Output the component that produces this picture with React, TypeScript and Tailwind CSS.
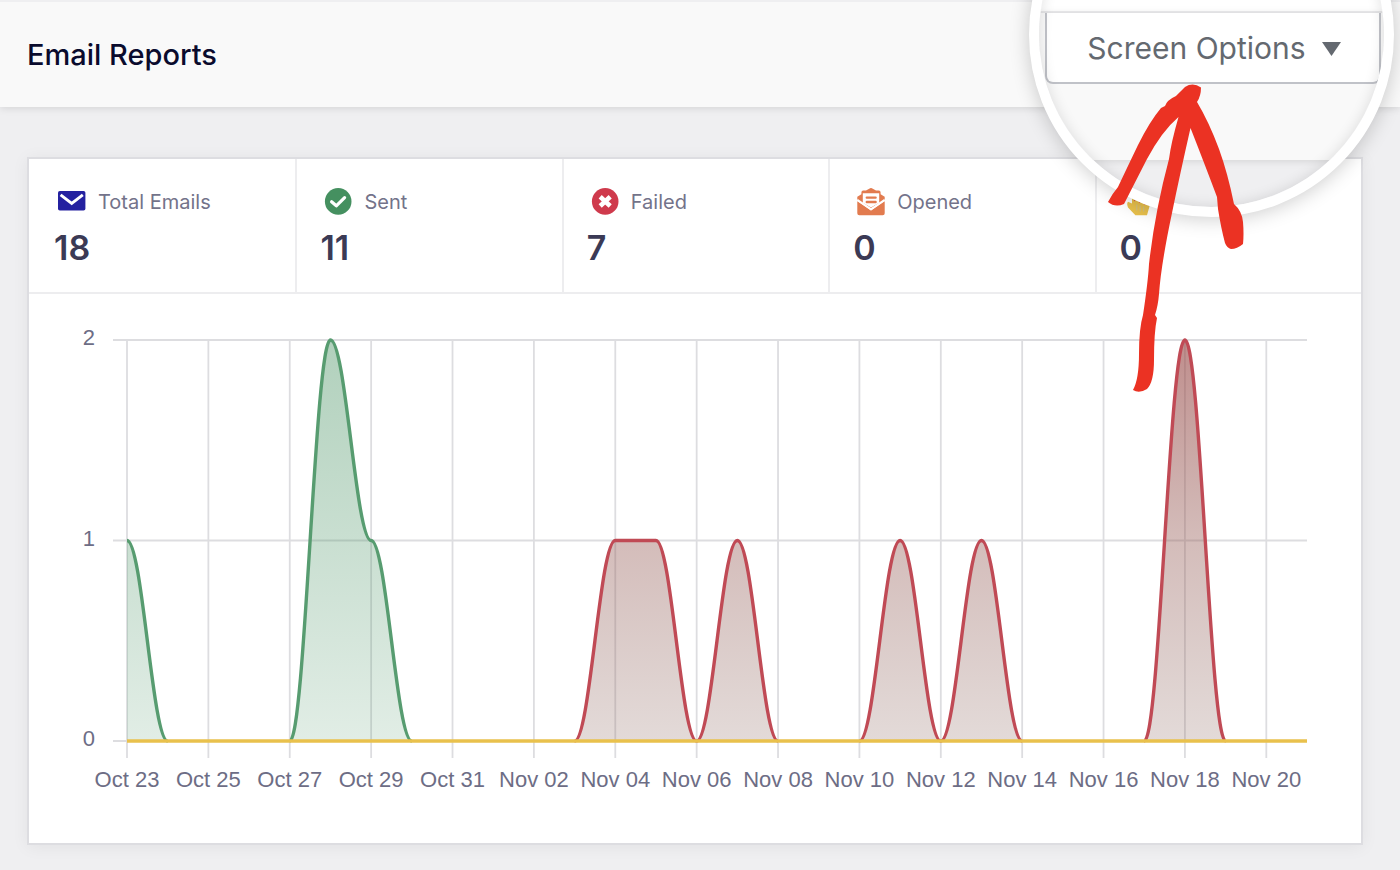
import type { ReactNode } from 'react';

type Stat = { label: string; value: number; icon: ReactNode };

const DAYS = 29;
const PLOT = { left: 98, right: 1278, top: 46, bottom: 447 };

const labels = [
  'Oct 23', 'Oct 25', 'Oct 27', 'Oct 29', 'Oct 31', 'Nov 02', 'Nov 04', 'Nov 06',
  'Nov 08', 'Nov 10', 'Nov 12', 'Nov 14', 'Nov 16', 'Nov 18', 'Nov 20',
];

// [day, value] runs, each one starts and ends on the base line
const sent = [
  [[0, 1], [1, 0]],
  [[4, 0], [5, 2], [6, 1], [7, 0]],
];
const failed = [
  [[11, 0], [12, 1], [13, 1], [14, 0]],
  [[14, 0], [15, 1], [16, 0]],
  [[18, 0], [19, 1], [20, 0]],
  [[20, 0], [21, 1], [22, 0]],
  [[25, 0], [26, 2], [27, 0]],
];

const toX = (day: number) => PLOT.left + ((PLOT.right - PLOT.left) * day) / DAYS;
const toY = (value: number) => PLOT.bottom - ((PLOT.bottom - PLOT.top) * value) / 2;

function linePath(points: number[][]) {
  return points
    .map(([day, value], i) => {
      const x = toX(day);
      const y = toY(value);
      if (i === 0) return `M${x} ${y}`;
      const px = toX(points[i - 1][0]);
      const py = toY(points[i - 1][1]);
      const c = (x - px) * 0.38;
      return `C${px + c} ${py} ${x - c} ${y} ${x} ${y}`;
    })
    .join(' ');
}

function areaPath(points: number[][]) {
  const first = toX(points[0][0]);
  const last = toX(points[points.length - 1][0]);
  return `${linePath(points)} L${last} ${PLOT.bottom} L${first} ${PLOT.bottom} Z`;
}

function MailIcon() {
  return (
    <svg className="size-[34px]" viewBox="0 0 34 34" fill="none" aria-hidden="true">
      <rect x="4" y="6" width="27.4" height="19.6" rx="1.8" fill="#2421a0" />
      <path d="M6.6 9.8 17.7 18.4 28.8 9.8" stroke="#fff" strokeWidth="2.9" />
    </svg>
  );
}

function SentIcon() {
  return (
    <svg className="size-[34px]" viewBox="0 0 34 34" fill="none" aria-hidden="true">
      <circle cx="18.2" cy="16.4" r="13.3" fill="#459060" />
      <path d="M11.6 16.8 16.3 20.8 24.6 12.6" stroke="#fff" strokeWidth="3.2" strokeLinecap="round" strokeLinejoin="round" />
    </svg>
  );
}

function FailedIcon() {
  return (
    <svg className="size-[34px]" viewBox="0 0 34 34" fill="none" aria-hidden="true">
      <circle cx="18.2" cy="16.4" r="13.3" fill="#cf3a4c" />
      <path d="M13.2 11.8 23.2 21M23.2 11.8 13.2 21" stroke="#fff" strokeWidth="4.6" />
    </svg>
  );
}

function OpenedIcon() {
  return (
    <svg className="size-[34px]" viewBox="0 0 34 34" fill="none" aria-hidden="true">
      <path d="M4.3 11.8 8.4 9.200V7.400Q8.4 5.600 10.2 5.600H13L16.2 3.700Q18 2.400 19.8 3.700L23 5.600H25.8Q27.6 5.600 27.6 7.400V9.200L31.7 11.8V15.200L18 23.200 4.3 15.200Z" fill="#e27b4f" />
      <path d="M9.8 8.200H26.200V17.8L18 22.6 9.8 17.8Z" fill="#fff" />
      <path d="M13.8 12.6H22.6M13.8 17H22.6" stroke="#e27b4f" strokeWidth="2.4" strokeLinecap="round" />
      <path d="M4.3 16.200 18 25.600 31.7 16.200V28.200Q31.7 30.200 29.7 30.200H6.3Q4.3 30.200 4.3 28.200Z" fill="#e27b4f" />
      <path d="M4.3 14.800 18 24.200 31.7 14.800" stroke="#fff" strokeWidth="2" />
    </svg>
  );
}

function ClickedIcon() {
  return (
    <svg className="size-[34px]" viewBox="0 0 34 34" fill="none" aria-hidden="true">
      <path d="M12 5Q14 2.4 16 5.4V10L28.6 14Q30.4 16 29.6 21L27 30.2H15.4L8 22.4Q6.4 18.6 8 16.8L12 18.6Z" fill="#e9c14c" />
      <path d="M16.8 19.400V25.400M20.2 20.400V26.400M23.6 21.400V26.400" stroke="#d2bf80" strokeWidth="1.2" />
      <g fill="#e2603f">
        <circle cx="14.6" cy="15.4" r="0.8" />
        <circle cx="19.6" cy="17.2" r="0.8" />
        <circle cx="24.8" cy="19.200" r="0.8" />
      </g>
    </svg>
  );
}

const stats: Stat[] = [
  { label: 'Total Emails', value: 18, icon: <MailIcon /> },
  { label: 'Sent', value: 11, icon: <SentIcon /> },
  { label: 'Failed', value: 7, icon: <FailedIcon /> },
  { label: 'Opened', value: 0, icon: <OpenedIcon /> },
  { label: '', value: 0, icon: <ClickedIcon /> },
];

function StatsRow() {
  return (
    <div className="grid grid-cols-5 border-b-2 border-[#ededef]">
      {stats.map((stat, i) => (
        <div key={i} className="border-l-2 border-[#ededef] pt-[25px] pr-6 pb-6 pl-[23px] first:border-l-0 first:pl-[25px]">
          <div className="flex h-9 items-center gap-[10px] text-xl text-[#73738a]">
            {stat.icon}
            <span>{stat.label}</span>
          </div>
          <div className="mt-2 text-[34px] leading-10 font-semibold text-[#3b3a55]">{stat.value}</div>
        </div>
      ))}
    </div>
  );
}

function Chart() {
  return (
    <svg className="block w-full" viewBox="0 0 1332 549" role="img" aria-label="Emails per day">
      <defs>
        <linearGradient id="sentFill" gradientUnits="userSpaceOnUse" x1="0" y1={PLOT.top} x2="0" y2={PLOT.bottom}>
          <stop offset="0" stopColor="#459060" stopOpacity="0.42" />
          <stop offset="1" stopColor="#459060" stopOpacity="0.16" />
        </linearGradient>
        <linearGradient id="failedFill" gradientUnits="userSpaceOnUse" x1="0" y1={PLOT.top} x2="0" y2={PLOT.bottom}>
          <stop offset="0" stopColor="#9d504e" stopOpacity="0.65" />
          <stop offset="0.5" stopColor="#965c56" stopOpacity="0.41" />
          <stop offset="1" stopColor="#8f6b63" stopOpacity="0.25" />
        </linearGradient>
      </defs>

      {/* Grid */}
      <g stroke="#dddde0" strokeWidth="1.8">
        {labels.map((label, i) => (
          <line key={label} x1={toX(i * 2)} x2={toX(i * 2)} y1={PLOT.top} y2={PLOT.bottom + 17} />
        ))}
        {[0, 1, 2].map((value) => (
          <line key={value} x1={PLOT.left - 14} x2={PLOT.right} y1={toY(value)} y2={toY(value)} />
        ))}
      </g>

      {/* Series */}
      {sent.map((run, i) => (
        <g key={i}>
          <path d={areaPath(run)} fill="url(#sentFill)" />
          <path d={linePath(run)} fill="none" stroke="#579c70" strokeWidth="3.4" />
        </g>
      ))}
      {failed.map((run, i) => (
        <g key={i}>
          <path d={areaPath(run)} fill="url(#failedFill)" />
          <path d={linePath(run)} fill="none" stroke="#c04a55" strokeWidth="3.4" />
        </g>
      ))}
      <line x1={PLOT.left} x2={PLOT.right} y1={PLOT.bottom} y2={PLOT.bottom} stroke="#e9c14c" strokeWidth="3.4" />

      {/* Axis labels */}
      <g className="font-['Liberation_Sans',Arial,sans-serif] text-[22px]" fill="#6d6d85">
        {[0, 1, 2].map((value) => (
          <text key={value} x="66" y={toY(value) + 5} textAnchor="end">{value}</text>
        ))}
        {labels.map((label, i) => (
          <text key={label} x={toX(i * 2)} y="493" textAnchor="middle">{label}</text>
        ))}
      </g>
    </svg>
  );
}

function ScreenOptions() {
  return (
    <div className="absolute -top-[148px] right-[6px]">
      {/* Magnifier */}
      <div className="relative size-[365px] overflow-hidden rounded-full border-[10px] border-white bg-[#efeff1] shadow-[0_2px_20px_rgba(0,0,0,0.2)]">
        <div className="h-[151px] border-b-2 border-[#ececee] bg-white" />
        <div className="h-[147px] bg-[#f9f9f9] pr-[3px] pl-[6px] shadow-[0_1px_8px_rgba(0,0,0,0.12)]">
          <button className="flex h-[71px] w-full items-center justify-center gap-4 rounded-b-lg border-2 border-t-0 border-[#c0c2c8] bg-white pt-[2px] pl-[2px] text-[30px] text-[#646970]">
            Screen Options
            <svg className="h-[14px] w-[19px]" viewBox="0 0 19 14" aria-hidden="true">
              <path d="M0 0H19L9.5 14Z" fill="#646970" />
            </svg>
          </button>
        </div>
        <div className="pointer-events-none absolute inset-0 rounded-full shadow-[inset_0_0_14px_rgba(0,0,0,0.12)]" />
      </div>

      {/* Hand drawn arrow */}
      <svg className="absolute top-[230px] left-[76px] h-[312px] w-[142px]" viewBox="1105 82 142 312" fill="#eb3223" aria-hidden="true">
        <path d="M1185 87Q1193 82 1201 87.500Q1201 96 1197 102Q1209 122 1219 149Q1228 174 1234 204Q1242 211 1243 222Q1244 234 1243 244Q1237 249 1231 249Q1227 248 1225 243Q1221 228 1218 209L1217 197Q1205 165 1190.500 128Q1180 174 1172 213Q1161 265 1159 294Q1158 306 1155 315L1157 318Q1154 332 1154 360Q1154 382 1147 389Q1139 394 1133 390Q1139 379 1139 354Q1139 328 1143 315Q1148 282 1149 264Q1155 211 1169 159Q1171 143 1178.500 117Q1162 131 1147 159L1124 204Q1115 208 1108 202Q1112 194 1118 187Q1126 170 1138 145Q1150 121 1161 108L1165 106Q1167 100 1176 96Q1181 91 1185 87Z" />
      </svg>
    </div>
  );
}

export default function App() {
  return (
    <div className="relative min-h-screen overflow-hidden bg-[#efeff1] font-[Inter,sans-serif]">
      <header className="border-t-2 border-[#efeff1] bg-[#f9f9f9] pr-[37px] pl-[27px] shadow-[0_1px_8px_rgba(0,0,0,0.12)]">
        <h1 className="py-[34px] text-[29px] leading-[37px] font-medium text-[#0a0b2d]">Email Reports</h1>
      </header>

      <main className="pt-[50px] pr-[37px] pb-6 pl-[27px]">
        <section className="border-2 border-[#dddde1] bg-white shadow-[0_2px_16px_rgba(0,0,0,0.06)]">
          <StatsRow />
          <Chart />
        </section>
      </main>

      <ScreenOptions />
    </div>
  );
}
